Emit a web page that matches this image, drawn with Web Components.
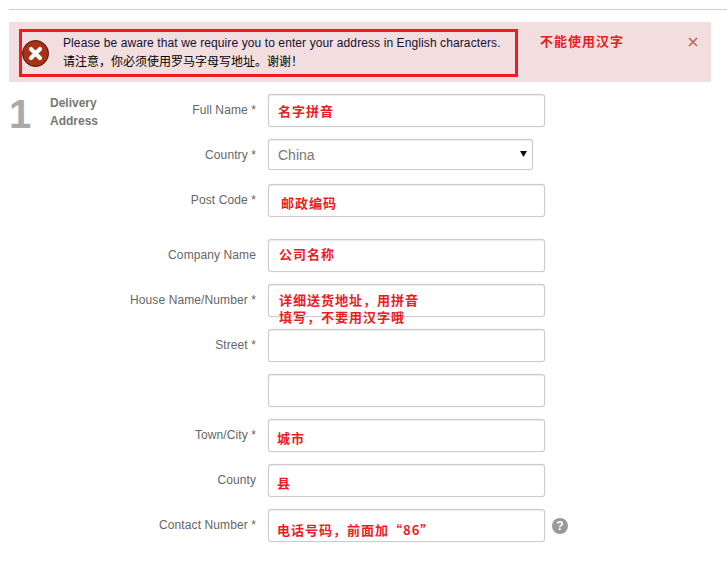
<!DOCTYPE html>
<html lang="en">
<head>
<meta charset="utf-8">
<title>Delivery Address</title>
<style>
  html, body { margin: 0; background: #fff; }
  body { font-family: "Liberation Sans", "Noto Sans CJK SC", sans-serif; width: 727px; height: 561px; overflow: hidden; }
  hr { height: 1px; margin: 9px 0 12px 9px; border: 0; background: #ccc; }
</style>
</head>
<body>
<hr>
<error-alert note="不能使用汉字">
  <div>Please be aware that we require you to enter your address in English characters.</div>
  <div lang="zh">请注意，你必须使用罗马字母写地址。谢谢！</div>
</error-alert>
<step-section number="1" title-text="Delivery Address">
  <form-field label="Full Name *"><red-note x="10" y="8">名字拼音</red-note></form-field>
  <form-field label="Country *" type="select" value="China"></form-field>
  <form-field label="Post Code *" spaced><red-note x="13" y="10">邮政编码</red-note></form-field>
  <form-field label="Company Name"><red-note x="11" y="6">公司名称</red-note></form-field>
  <form-field label="House Name/Number *"><red-note x="11" y="7">详细送货地址，用拼音<br>填写，不要用汉字哦</red-note></form-field>
  <form-field label="Street *"></form-field>
  <form-field></form-field>
  <form-field label="Town/City *"><red-note x="9" y="10">城市</red-note></form-field>
  <form-field label="County"><red-note x="9" y="10">县</red-note></form-field>
  <form-field label="Contact Number *" help><red-note x="9" y="12">电话号码，前面加“86”</red-note></form-field>
</step-section>

<script>
const alertTemplate = document.createElement('template');
alertTemplate.innerHTML = `
  <style>
    :host {
      display: flex;
      align-items: flex-start;
      width: 702px;
      height: 60px;
      box-sizing: border-box;
      margin-left: 9px;
      padding: 7px 0 0 10px;
      background: #f2dede;
      position: relative;
    }
    .box {
      display: flex;
      align-items: center;
      gap: 14px;
      width: 499px;
      height: 48px;
      box-sizing: border-box;
      border: 3px solid #ed1c24;
    }
    .icon { width: 27px; height: 27px; flex-shrink: 0; }
    .text { font-size: 12px; line-height: 18px; letter-spacing: 0.1px; color: #111133; }
    ::slotted(:first-child) { position: relative; top: -1px; }
    ::slotted([lang="zh"]) { color: #000; letter-spacing: 0; }
    .note {
      margin: 4px 0 0 22px;
      font: bold 13px/16px "Noto Sans CJK SC", sans-serif;
      letter-spacing: 1px;
      color: #ed1c24;
    }
    .close { position: absolute; left: 678px; top: 14px; width: 12px; height: 12px; }
  </style>
  <div class="box">
    <svg class="icon" viewBox="0 0 27 27">
      <circle cx="13.5" cy="13.5" r="13" fill="#a93115" stroke="#3a1a10" stroke-width="1"/>
      <path d="M9 9l9 9M18 9l-9 9" stroke="#fff" stroke-width="4.2" stroke-linecap="round"/>
    </svg>
    <div class="text"><slot></slot></div>
  </div>
  <div class="note"></div>
  <svg class="close" viewBox="0 0 12 12"><path d="M2 2l8 8M10 2l-8 8" stroke="#c0605a" stroke-width="1.6"/></svg>
`;

class ErrorAlert extends HTMLElement {
  constructor() {
    super();
    this.attachShadow({ mode: 'open' });
    this.shadowRoot.appendChild(alertTemplate.content.cloneNode(true));
    this.shadowRoot.querySelector('.note').textContent = this.getAttribute('note');
  }
}

const sectionTemplate = document.createElement('template');
sectionTemplate.innerHTML = `
  <style>
    :host {
      display: flex;
      margin: 12px 0 0 9px;
    }
    .head { display: flex; width: 120px; flex-shrink: 0; color: #777; }
    .num { width: 41px; font: bold 40px/40px "Liberation Sans", sans-serif; color: #aaa; }
    .title { width: 60px; font: bold 12px/18px "Liberation Sans", sans-serif; }
    .fields { display: flex; flex-direction: column; gap: 12px; }
  </style>
  <div class="head">
    <div class="num"></div>
    <div class="title"></div>
  </div>
  <div class="fields"><slot></slot></div>
`;

class StepSection extends HTMLElement {
  constructor() {
    super();
    this.attachShadow({ mode: 'open' });
    this.shadowRoot.appendChild(sectionTemplate.content.cloneNode(true));
    this.shadowRoot.querySelector('.num').textContent = this.getAttribute('number');
    this.shadowRoot.querySelector('.title').textContent = this.getAttribute('title-text');
  }
}

const fieldTemplate = document.createElement('template');
fieldTemplate.innerHTML = `
  <style>
    :host {
      display: flex;
      align-items: flex-start;
      gap: 12px;
    }
    :host([spaced]) { margin-bottom: 10px; }
    :host([type="select"]) { margin-bottom: 2px; }
    label {
      width: 127px;
      padding-top: 9px;
      font-size: 12px;
      line-height: 14px;
      letter-spacing: 0.1px;
      color: #666;
      text-align: right;
      white-space: nowrap;
    }
    .wrap { position: relative; width: 277px; height: 33px; }
    :host([type="select"]) .wrap { width: 265px; height: 31px; }
    input, select {
      display: block;
      width: 100%;
      height: 100%;
      box-sizing: border-box;
      margin: 0;
      padding: 0 9px;
      border: 1px solid #ccc;
      border-radius: 3px;
      background: #fff;
      box-shadow: inset 0 1px 1px rgba(0, 0, 0, 0.075), 0 0 1px rgba(0, 0, 0, 0.2);
      font: 14px "Liberation Sans", sans-serif;
      color: #777;
      appearance: none;
      outline: none;
    }
    .arrow { position: absolute; right: 6px; top: 12px; width: 7px; height: 6px; }
    .help {
      position: absolute;
      left: 284px;
      top: 9px;
      width: 16px;
      height: 16px;
      border-radius: 50%;
      background: #999;
      color: #fff;
      font: bold 12px/16px "Liberation Sans", sans-serif;
      text-align: center;
    }
  </style>
  <label></label>
  <div class="wrap"><slot></slot></div>
`;

class FormField extends HTMLElement {
  constructor() {
    super();
    this.attachShadow({ mode: 'open' });
    this.shadowRoot.appendChild(fieldTemplate.content.cloneNode(true));
    this.shadowRoot.querySelector('label').textContent = this.getAttribute('label') || '';

    const wrap = this.shadowRoot.querySelector('.wrap');
    if (this.getAttribute('type') === 'select') {
      const select = document.createElement('select');
      const option = document.createElement('option');
      option.textContent = this.getAttribute('value');
      select.appendChild(option);
      wrap.prepend(select);
      wrap.insertAdjacentHTML('beforeend',
        '<svg class="arrow" viewBox="0 0 7 6"><path d="M0 0h7L3.5 6z" fill="#111"/></svg>');
    } else {
      wrap.prepend(document.createElement('input'));
    }

    if (this.hasAttribute('help')) {
      wrap.insertAdjacentHTML('beforeend', '<div class="help">?</div>');
    }
  }
}

const noteTemplate = document.createElement('template');
noteTemplate.innerHTML = `
  <style>
    :host {
      position: absolute;
      font: bold 13px/17px "Noto Sans CJK SC", sans-serif;
      letter-spacing: 1px;
      color: #ed1c24;
      white-space: nowrap;
    }
  </style>
  <slot></slot>
`;

class RedNote extends HTMLElement {
  constructor() {
    super();
    this.attachShadow({ mode: 'open' });
    this.shadowRoot.appendChild(noteTemplate.content.cloneNode(true));
    this.style.left = this.getAttribute('x') + 'px';
    this.style.top = this.getAttribute('y') + 'px';
  }
}

customElements.define('error-alert', ErrorAlert);
customElements.define('step-section', StepSection);
customElements.define('form-field', FormField);
customElements.define('red-note', RedNote);
</script>
</body>
</html>
